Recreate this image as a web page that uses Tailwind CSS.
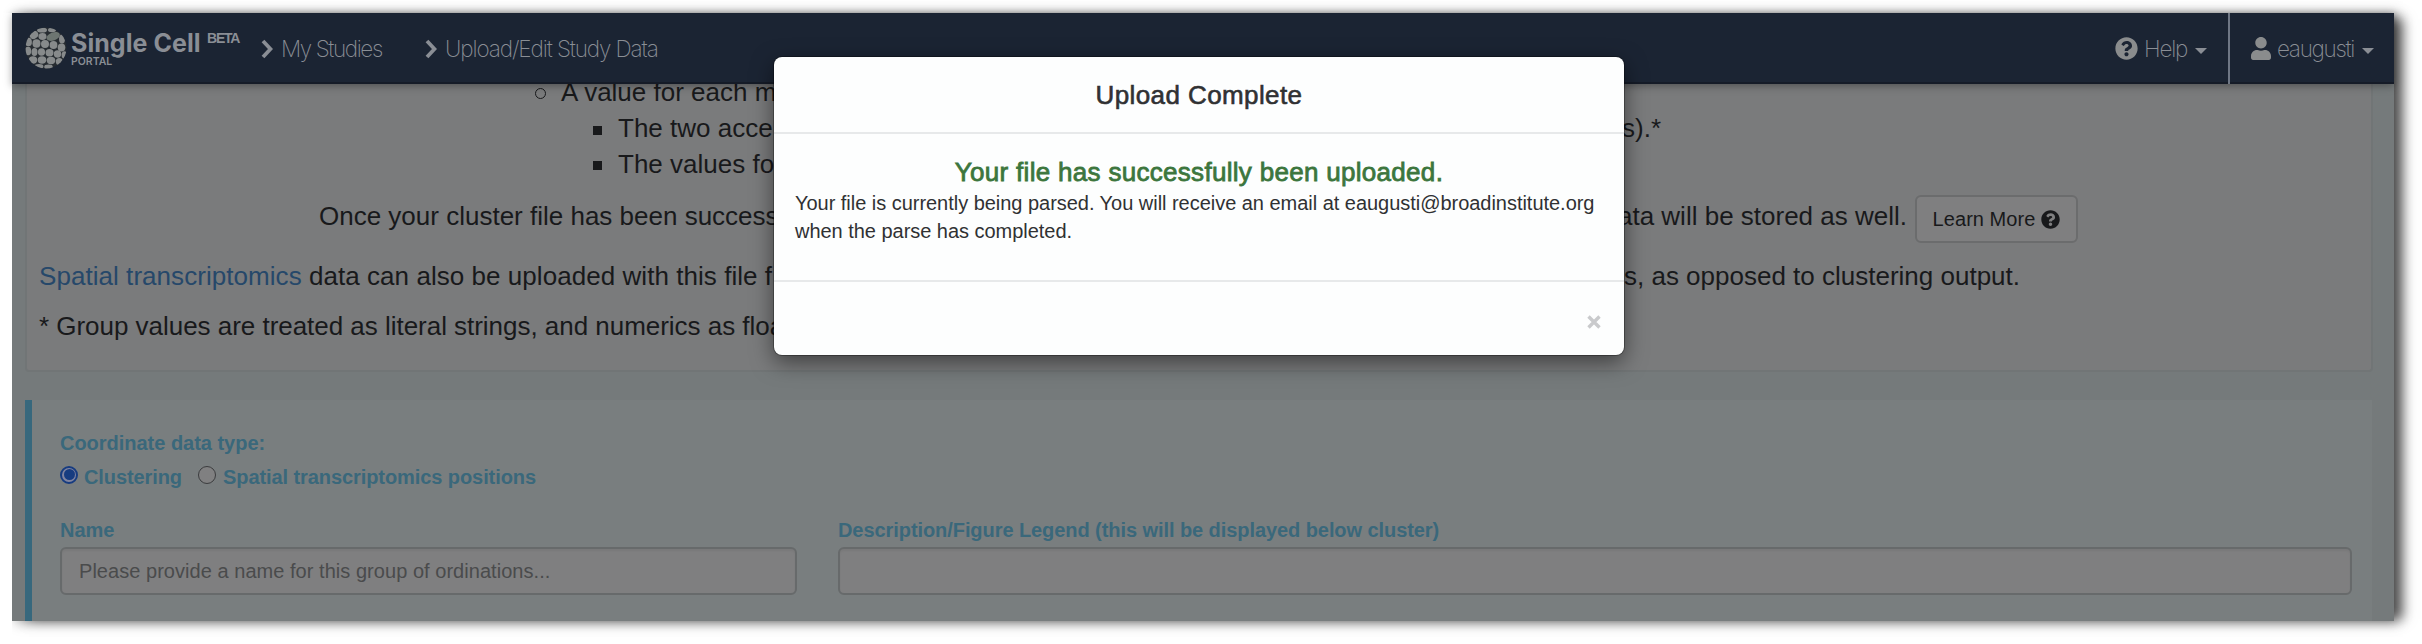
<!DOCTYPE html>
<html lang="en">
<head>
<meta charset="utf-8">
<title>Single Cell Portal</title>
<script src="https://cdn.jsdelivr.net/npm/@tailwindcss/browser@4"></script>
</head>
<body class="bg-white w-[2422px] h-[644px] overflow-hidden font-['Liberation_Sans',Arial,sans-serif] text-[#18191b]">
<div class="pl-3 pt-[13px]">
<div class="relative w-[2382px] h-[608px] flex flex-col bg-[#757a7b] shadow-[13px_2px_12px_-4px_rgba(0,0,0,0.55),4px_1px_12px_0px_rgba(0,0,0,0.4)]">
  <!-- keeps the left margin free of shadow -->
  <div class="absolute -left-3 top-0 w-3 h-[625px] bg-white"></div>

  <nav class="relative z-10 h-[71px] shrink-0 bg-[#1b2433] border-b-2 border-[#151b27] shadow-[0_2px_8px_rgba(0,0,0,0.35)] flex items-start text-[#8a8e95]">
    <svg class="ml-[13px] mt-[14px] w-[42px] h-[42px] shrink-0" viewBox="0 0 42 42">
      <defs><clipPath id="disc"><circle cx="21" cy="21" r="20.5"/></clipPath></defs>
      <circle cx="21" cy="21" r="20.5" fill="#272c31"/>
      <g clip-path="url(#disc)" fill="#878a8b">
        <ellipse cx="17" cy="3" rx="5" ry="2.6"/><ellipse cx="27" cy="3" rx="4" ry="2.2"/>
        <ellipse cx="9" cy="8" rx="4.500" ry="3.700" transform="rotate(-35 9 8)"/>
        <ellipse cx="17.500" cy="9.500" rx="4" ry="3.400"/>
        <ellipse cx="28" cy="9.500" rx="7" ry="4" fill="#6d7571" transform="rotate(-20 28 9)"/>
        <ellipse cx="37" cy="12" rx="3" ry="4.500"/>
        <ellipse cx="3.500" cy="15" rx="3.400" ry="4.300"/><ellipse cx="11.500" cy="16.500" rx="4" ry="4.200"/>
        <ellipse cx="20" cy="17" rx="4" ry="3.900"/><ellipse cx="28.500" cy="18" rx="3.900" ry="4"/>
        <ellipse cx="36.500" cy="20.500" rx="3.800" ry="4"/>
        <ellipse cx="3" cy="24" rx="3.200" ry="4.300"/><ellipse cx="9.500" cy="25" rx="3" ry="3.900"/>
        <ellipse cx="16.500" cy="25" rx="3.600" ry="3.800"/><ellipse cx="24.500" cy="25.800" rx="4" ry="3.700"/>
        <ellipse cx="32.500" cy="27" rx="3.700" ry="3.700"/><ellipse cx="39.500" cy="28" rx="2.900" ry="3.800"/>
        <ellipse cx="8" cy="33" rx="4.200" ry="3.700"/><ellipse cx="17" cy="33" rx="4.300" ry="3.700"/>
        <ellipse cx="26" cy="33.500" rx="4.300" ry="3.700"/><ellipse cx="34.300" cy="34.500" rx="3.500" ry="3.500"/>
        <ellipse cx="14" cy="39.500" rx="4.400" ry="2.400"/><ellipse cx="23.500" cy="40" rx="4.300" ry="2.400"/>
      </g>
    </svg>
    <div class="ml-1 mt-[15px] w-[136px] shrink-0 font-['Inter',sans-serif] whitespace-nowrap">
      <div class="text-[25px] leading-[30px] font-bold tracking-[0.05px]">Single Cell</div>
      <div class="text-[10.500px] leading-[10px] -mt-px font-semibold">PORTAL</div>
    </div>
    <div class="mt-[17px] w-[54px] text-[14px] leading-[16px] font-bold tracking-[-1.200px]">BETA</div>
    <div class="flex h-[71px] items-center font-['Inter',sans-serif] font-extralight text-[22.500px] whitespace-nowrap">
      <svg class="w-3 h-5" viewBox="0 0 12 20"><path d="M2 2l7.500 8L2 18" fill="none" stroke="#8a8e95" stroke-width="3.800"/></svg>
      <span class="ml-2 w-[144px] tracking-[-1.400px]">My Studies</span>
      <svg class="w-3 h-5" viewBox="0 0 12 20"><path d="M2 2l7.500 8L2 18" fill="none" stroke="#8a8e95" stroke-width="3.800"/></svg>
      <span class="ml-2 tracking-[-1.100px]">Upload/Edit Study Data</span>
    </div>
    <div class="ml-auto flex h-[71px] items-center font-['Inter',sans-serif] font-extralight text-[22.500px] whitespace-nowrap">
      <svg class="w-[23px] h-[23px]" viewBox="0 0 512 512"><path fill="#8a8c8d" d="M504 256c0 137-111 248-248 248S8 393 8 256 119 8 256 8s248 111 248 248zM262.700 90c-54.500 0-89.300 23-116.500 63.800-3.500 5.300-2.400 12.400 2.700 16.300l34.700 26.300c5.200 3.900 12.600 3 16.700-2.100 17.900-22.700 30.100-35.800 57.300-35.800 20.400 0 45.700 13.100 45.700 33 0 15-12.400 22.700-32.500 34C247.100 238.500 216 254.900 216 296v4c0 6.600 5.400 12 12 12h56c6.600 0 12-5.400 12-12v-1.300c0-28.500 83.200-29.600 83.200-106.700 0-58-60.200-102-116.500-102zM256 338c-25.400 0-46 20.600-46 46s20.600 46 46 46 46-20.600 46-46-20.600-46-46-46z"/></svg>
      <span class="w-[57px] pl-[6px] tracking-[-1.200px]">Help</span>
      <svg class="w-3 h-[6px] mt-1" viewBox="0 0 12 6"><path fill="#8a8e95" d="M0 0h12L6 6z"/></svg>
      <span class="ml-[21px] w-[2px] h-[71px] bg-[#6f7785]"></span>
      <svg class="ml-[21px] w-[20px] h-[23px]" viewBox="0 0 448 512"><path fill="#8a8c8d" d="M224 256c70.700 0 128-57.300 128-128S294.700 0 224 0 96 57.300 96 128s57.300 128 128 128zm89.600 32h-16.700c-22.200 10.200-46.900 16-72.900 16s-50.600-5.800-72.900-16h-16.700C60.200 288 0 348.200 0 422.400V464c0 26.500 21.500 48 48 48h352c26.500 0 48-21.500 48-48v-41.600c0-74.200-60.200-134.400-134.400-134.400z"/></svg>
      <span class="ml-[6px] w-[85px] tracking-[-1.300px]">eaugusti</span>
      <svg class="w-3 h-[6px] mt-1 mr-5" viewBox="0 0 12 6"><path fill="#8a8e95" d="M0 0h12L6 6z"/></svg>
    </div>
  </nav>

  <section class="ml-[13px] w-[2348px] h-[288px] shrink-0 bg-[#7a7b7c] border-x-2 border-b-2 border-[#717576] rounded-b-[4px] text-[26px] whitespace-nowrap">
    <div class="-mt-[9px] h-[35px] leading-[35px] flex items-center pl-[508px]">
      <span class="w-[11px] h-[11px] mt-[2px] rounded-full border-[1.500px] border-[#18191b]"></span>
      <span class="ml-[15px]">A value for each m</span>
    </div>
    <div class="h-[36px] leading-[37px] flex items-center pl-[566px] w-[1634px]">
      <span class="w-[9px] h-[9px] mt-[4px] bg-[#18191b]"></span>
      <span class="ml-[16px]">The two acce</span>
      <span class="ml-auto">s).*</span>
    </div>
    <div class="h-[35px] leading-[36px] flex items-center pl-[566px]">
      <span class="w-[9px] h-[9px] mt-[3px] bg-[#18191b]"></span>
      <span class="ml-[16px]">The values for</span>
    </div>
    <div class="mt-[14px] h-[48px] leading-[43px] flex items-start pl-[292px] w-[2051px]">
      <span>Once your cluster file has been success</span>
      <span class="ml-auto">ata will be stored as well.</span>
      <button class="ml-[8px] w-[163px] h-[48px] shrink-0 flex items-center justify-center gap-[6px] text-[20px] leading-[46px] tracking-[0.05px] bg-[#7f7f80] border-2 border-[#6b6c6d] rounded-[6px]">Learn More
        <svg class="w-[19px] h-[19px]" viewBox="0 0 512 512"><path fill="#18191b" d="M504 256c0 137-111 248-248 248S8 393 8 256 119 8 256 8s248 111 248 248zM262.700 90c-54.500 0-89.300 23-116.500 63.800-3.500 5.300-2.400 12.400 2.700 16.300l34.700 26.300c5.200 3.900 12.600 3 16.700-2.100 17.900-22.700 30.100-35.800 57.300-35.800 20.400 0 45.700 13.100 45.700 33 0 15-12.400 22.700-32.500 34C247.100 238.500 216 254.900 216 296v4c0 6.600 5.400 12 12 12h56c6.600 0 12-5.400 12-12v-1.300c0-28.500 83.200-29.600 83.200-106.700 0-58-60.200-102-116.500-102zM256 338c-25.400 0-46 20.600-46 46s20.600 46 46 46 46-20.600 46-46-20.600-46-46-46z"/></svg>
      </button>
    </div>
    <div class="mt-[15px] h-[36px] leading-[36px] flex pl-3 w-[1993px]">
      <span class="tracking-[0.05px]"><a class="text-[#26486a]">Spatial transcriptomics</a> data can also be uploaded with this file f</span>
      <span class="ml-auto">s, as opposed to clustering output.</span>
    </div>
    <div class="mt-[14px] h-[36px] leading-[36px] pl-3 tracking-[-0.030px]">* Group values are treated as literal strings, and numerics as floa</div>
  </section>

  <section class="ml-[13px] mt-[28px] w-[2347px] grow bg-[#797e7f] border-l-[7px] border-[#37687d] pl-[28px] text-[20px] font-bold text-[#3a687b] whitespace-nowrap">
    <div class="pt-[29px] leading-[28px] tracking-[-0.020px]">Coordinate data type:</div>
    <div class="mt-[6px] h-[28px] leading-[28px] flex items-center">
      <span class="w-[18px] h-[18px] -mt-[5px] rounded-full border-2 border-[#173c80] bg-[#8084a0] flex items-center justify-center"><span class="w-[11px] h-[11px] rounded-full bg-[#173c80]"></span></span>
      <span class="ml-[6px] w-[114px] tracking-[-0.100px]">Clustering</span>
      <span class="w-[18px] h-[18px] -mt-[5px] rounded-full border-[1.500px] border-[#3b3c3e] bg-[#808081]"></span>
      <span class="ml-[7px] tracking-[-0.080px]">Spatial transcriptomics positions</span>
    </div>
    <div class="mt-[25px] flex">
      <div class="w-[737px]">
        <div class="leading-[28px]">Name</div>
        <div class="mt-[3px] h-[48px] border-2 border-[#676a6b] rounded-[6px] bg-[#7f7f80] shadow-[inset_0_2px_2px_rgba(0,0,0,0.05)] pl-[17px] leading-[45px] font-normal text-[#4a4b4c] tracking-[0.040px]">Please provide a name for this group of ordinations...</div>
      </div>
      <div class="ml-[41px] w-[1514px]">
        <div class="leading-[28px] tracking-[-0.070px]">Description/Figure Legend (this will be displayed below cluster)</div>
        <div class="mt-[3px] h-[48px] border-2 border-[#676a6b] rounded-[6px] bg-[#7f7f80] shadow-[inset_0_2px_2px_rgba(0,0,0,0.05)]"></div>
      </div>
    </div>
  </section>

  <div role="dialog" class="absolute z-20 left-[762px] top-[44px] w-[850px] h-[298px] bg-[#fdfefe] rounded-[8px] shadow-[0_0_0_1px_rgba(0,0,0,0.3),0_7px_22px_rgba(0,0,0,0.5)] flex flex-col whitespace-nowrap text-[#303133]">
    <div class="h-[77px] border-b-2 border-[#e7e9ea] text-center text-[26px] leading-[77px] tracking-[0.400px] [-webkit-text-stroke:0.6px]">Upload Complete</div>
    <div class="h-[148px] border-b-2 border-[#e7e9ea] pt-[20px] px-[21px] text-[20px]">
      <div class="text-center text-[26px] leading-[36px] tracking-[0.300px] text-[#3c763d] [-webkit-text-stroke:0.8px]">Your file has successfully been uploaded.</div>
      <div class="leading-[28px] -mt-px tracking-[-0.030px]">Your file is currently being parsed. You will receive an email at eaugusti@broadinstitute.org<br>when the parse has completed.</div>
    </div>
    <div class="grow flex items-center justify-end pr-[23px] pt-[6px]">
      <svg class="w-[14px] h-[14px]" viewBox="0 0 14 14"><path d="M1.500 1.500l11 11M12.500 1.500l-11 11" stroke="#c9cacc" stroke-width="3.400"/></svg>
    </div>
  </div>
</div>
</div>
</body>
</html>
